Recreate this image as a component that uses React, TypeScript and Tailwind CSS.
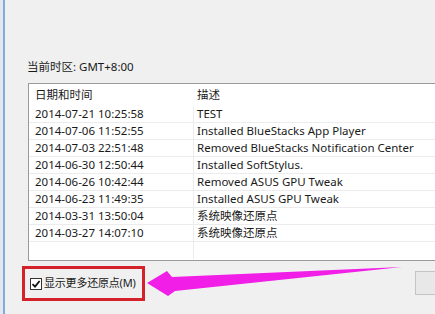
const FONT = "font-['Noto_Sans','Noto_Sans_CJK_SC',sans-serif]";

const points = [
  { at: '2014-07-21 10:25:58', text: 'TEST' },
  { at: '2014-07-06 11:52:55', text: 'Installed BlueStacks App Player' },
  { at: '2014-07-03 22:51:48', text: 'Removed BlueStacks Notification Center' },
  { at: '2014-06-30 12:50:44', text: 'Installed SoftStylus.' },
  { at: '2014-06-26 10:42:44', text: 'Removed ASUS GPU Tweak' },
  { at: '2014-06-23 11:49:35', text: 'Installed ASUS GPU Tweak' },
  { at: '2014-03-31 13:50:04', text: '系统映像还原点' },
  { at: '2014-03-27 14:07:10', text: '系统映像还原点' },
];

function Row({ at, text }: { at: string; text: string }) {
  return (
    <div className="flex h-[17px] border-b border-[#ececec] items-center">
      <div className="w-[165px] h-full shrink-0 border-r border-[#ececec] pl-[6px] flex items-center">{at}</div>
      <div className="pl-[3px] whitespace-nowrap">{text}</div>
    </div>
  );
}

export default function App() {
  return (
    <div className={`relative w-[435px] h-[314px] overflow-hidden bg-[#f0f0f0] text-[11.5px] text-[#1a1a1a] ${FONT}`}>
      <div className="flex h-full">
        <div className="w-[3px] shrink-0 bg-[#e4e8ee]" />
        <div className="w-[2px] shrink-0 bg-[#7eaee0]" />
        <div className="flex-1 min-w-0 pl-[22px]">
          <div className="h-[58px]" />
          <div className="h-[18px] leading-[18px]">当前时区: GMT+8:00</div>
          <div className="h-[7px]" />
          <div className="ml-[1px] w-[460px] h-[178px] bg-white border border-[#9a9a9a] border-r-0">
            <div className="flex h-[22px] items-center">
              <div className="w-[165px] shrink-0 pl-[6px]">日期和时间</div>
              <div className="pl-[3px]">描述</div>
            </div>
            {points.map((p) => (
              <Row key={p.at} {...p} />
            ))}
            <div className="flex h-[17px]">
              <div className="w-[165px] border-r border-[#ececec]" />
            </div>
          </div>
          <div className="flex items-start mt-[5px]">
            <div className="ml-[-5px] w-[123px] h-[35px] shrink-0 border-[3px] border-[#d3222a] flex items-center pl-[5px] gap-[2px] whitespace-nowrap">
              <span className="w-[12px] h-[12px] shrink-0 border border-[#333] bg-white flex items-center justify-center">
                <svg width="10" height="10" viewBox="0 0 10 10">
                  <path d="M1.5 5.2 L4 7.6 L8.6 2" stroke="#111" strokeWidth="1.8" fill="none" />
                </svg>
              </span>
              <span className="text-[11px] tracking-[-0.2px]">显示更多还原点(M)</span>
            </div>
            <div className="flex-1" />
            <div className="mt-[5px] w-[30px] h-[24px] shrink-0 border border-[#c4c4c4] bg-[#e8e8e8] mr-[-10px]" />
          </div>
        </div>
      </div>
      <svg className="absolute left-0 top-0" width="435" height="314" viewBox="0 0 435 314">
        <polygon
          points="147,283 167,271 172,277 402,267 175,291 168,296"
          fill="#f01ee6"
        />
      </svg>
    </div>
  );
}
